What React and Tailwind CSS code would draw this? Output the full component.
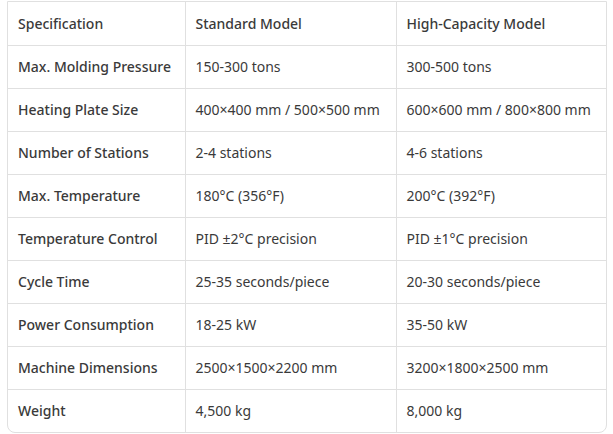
const rows = [
  ["Max. Molding Pressure", "150-300 tons", "300-500 tons"],
  ["Heating Plate Size", "400×400 mm / 500×500 mm", "600×600 mm / 800×800 mm"],
  ["Number of Stations", "2-4 stations", "4-6 stations"],
  ["Max. Temperature", "180°C (356°F)", "200°C (392°F)"],
  ["Temperature Control", "PID ±2°C precision", "PID ±1°C precision"],
  ["Cycle Time", "25-35 seconds/piece", "20-30 seconds/piece"],
  ["Power Consumption", "18-25 kW", "35-50 kW"],
  ["Machine Dimensions", "2500×1500×2200 mm", "3200×1800×2500 mm"],
  ["Weight", "4,500 kg", "8,000 kg"],
];

export default function App() {
  return (
    <div className="w-[613px] h-[434px] bg-white pl-[7px] pt-[1px] font-['Noto_Sans',sans-serif] text-[14px] text-[#3a3a3a]">
      <div className="w-[600px] border border-[#e0e0e0] rounded-b-lg overflow-hidden">
        <table className="w-full border-collapse">
          <thead>
            <tr className="h-[43px]">
              <th className="w-[177px] text-left font-medium px-[10px] border-r border-[#e0e0e0]">Specification</th>
              <th className="w-[211px] text-left font-medium px-[10px] border-r border-[#e0e0e0]">Standard Model</th>
              <th className="text-left font-medium px-[10px]">High-Capacity Model</th>
            </tr>
          </thead>
          <tbody>
            {rows.map((r, i) => (
              <tr key={i} className="h-[43px] border-t border-[#e0e0e0]">
                <td className="px-[10px] font-medium border-r border-[#e0e0e0]">{r[0]}</td>
                <td className="px-[10px] border-r border-[#e0e0e0]">{r[1]}</td>
                <td className="px-[10px]">{r[2]}</td>
              </tr>
            ))}
          </tbody>
        </table>
      </div>
    </div>
  );
}
